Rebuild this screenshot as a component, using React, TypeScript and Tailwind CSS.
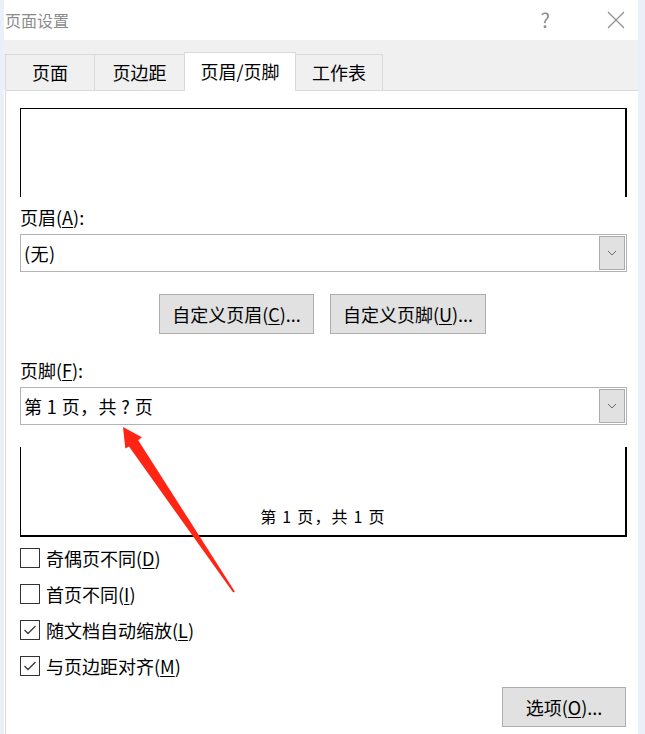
import React from "react";

const FONT = { fontFamily: '"Noto Sans CJK SC", "Noto Sans", sans-serif' };

function Key({ k }: { k: string }) {
  return <span className="underline underline-offset-2 decoration-1">{k}</span>;
}

function Chevron() {
  return (
    <svg width="10" height="6" viewBox="0 0 10 6">
      <polyline points="1,1 5,5 9,1" fill="none" stroke="#6b6b6b" strokeWidth="1" />
    </svg>
  );
}

function Select({ value }: { value: string }) {
  return (
    <div className="flex h-[38px] items-center border border-[#b3b3b3] bg-white py-[1px] pr-[1px]">
      <span className="flex-1 pl-[3px] text-[18px] leading-[24px] tracking-[0.4px] text-black">{value}</span>
      <div className="flex h-full w-[26px] items-center justify-center border border-[#acacac] bg-[#e1e1e1]">
        <Chevron />
      </div>
    </div>
  );
}

function Button({ children, w }: { children: React.ReactNode; w: string }) {
  return (
    <div
      className={`flex h-[40px] items-center justify-center border border-[#adadad] bg-[#e1e1e1] text-[18px] leading-[24px] text-black ${w}`}
    >
      {children}
    </div>
  );
}

function Check({ checked, children }: { checked: boolean; children: React.ReactNode }) {
  return (
    <div className="flex h-[20px] items-center gap-[6px]">
      <div className="flex h-[20px] w-[20px] items-center justify-center border border-[#333333] bg-white">
        {checked && (
          <svg width="18" height="18" viewBox="0 0 18 18">
            <polyline points="3.5,9 7,12.5 14.5,5" fill="none" stroke="#3a3a3a" strokeWidth="1.3" />
          </svg>
        )}
      </div>
      <span className="text-[18px] leading-[24px] text-black">{children}</span>
    </div>
  );
}

const tabs = [
  { label: "页面", w: "w-[89px]" },
  { label: "页边距", w: "w-[90px]" },
  { label: "页眉/页脚", w: "w-[112px]", active: true },
  { label: "工作表", w: "w-[87px]" },
];

export default function App() {
  return (
    <div className="relative flex h-[734px] w-[645px] overflow-hidden bg-[#eaeff8]" style={FONT}>
      <div className="ml-[4px] flex w-[634px] flex-col bg-white">
        {/* title bar */}
        <div className="flex h-[40px] items-center pl-[1px]">
          <span className="text-[16px] text-[#8c8c8c]">页面设置</span>
          <span className="ml-auto mr-[57px] text-[20px] text-[#8c8c8c]">?</span>
          <svg className="mr-[13px]" width="18" height="18" viewBox="0 0 18 18">
            <path d="M1 1 L17 17 M17 1 L1 17" stroke="#8c8c8c" strokeWidth="1.1" />
          </svg>
        </div>

        {/* tab strip */}
        <div className="flex h-[50px] items-end bg-[#f0f0f0] pl-[1px]">
          {tabs.map((t, i) =>
            t.active ? (
              <div
                key={t.label}
                className={`relative z-10 -mb-px flex h-[39px] items-center justify-center border-x border-t border-[#d9d9d9] bg-white pb-[2px] text-[18px] text-black ${t.w}`}
              >
                {t.label}
              </div>
            ) : (
              <div
                key={t.label}
                className={`flex h-[36px] items-center justify-center border-t border-[#d9d9d9] text-[18px] text-black ${t.w} ${
                  i === 0 ? "border-l" : ""
                } ${i === 1 ? "border-l" : ""} ${i === tabs.length - 1 ? "border-r" : ""}`}
              >
                {t.label}
              </div>
            )
          )}
        </div>

        {/* content */}
        <div className="ml-[1px] flex flex-1 flex-col border-l border-t border-[#d9d9d9] pl-[14px] pr-[11px] pt-[17px]">
          <div className="h-[89px] border-l border-r-2 border-t border-black" />

          <div className="mt-[8px] text-[18px] leading-[24px] text-black">
            页眉(<Key k="A" />):
          </div>
          <div className="mt-[5px]">
            <Select value="(无)" />
          </div>

          <div className="mt-[22px] flex justify-center gap-[16px] pr-[2px]">
            <Button w="w-[155px]">
              自定义页眉(<Key k="C" />)...
            </Button>
            <Button w="w-[156px]">
              自定义页脚(<Key k="U" />)...
            </Button>
          </div>

          <div className="mt-[24px] text-[18px] leading-[24px] text-black">
            页脚(<Key k="F" />):
          </div>
          <div className="mt-[5px]">
            <Select value="第 1 页，共 ? 页" />
          </div>

          <div className="mt-[22px] flex h-[90px] items-end justify-center border-b-2 border-l border-r-2 border-black pb-[9px]">
            <span className="text-[16px] leading-[20px] tracking-[1.2px] text-black">第 1 页，共 1 页</span>
          </div>

          <div className="mt-[11px] flex flex-col gap-[16px]">
            <Check checked={false}>
              奇偶页不同(<Key k="D" />)
            </Check>
            <Check checked={false}>
              首页不同(<Key k="I" />)
            </Check>
            <Check checked>
              随文档自动缩放(<Key k="L" />)
            </Check>
            <Check checked>
              与页边距对齐(<Key k="M" />)
            </Check>
          </div>

          <div className="mt-[11px] flex justify-end pr-[1px]">
            <Button w="w-[124px]">
              选项(<Key k="O" />)...
            </Button>
          </div>
        </div>
      </div>

      {/* red annotation arrow */}
      <svg className="pointer-events-none absolute left-0 top-0" width="645" height="734">
        <polygon
          points="123,427 141.9,437.2 138.2,440.3 234.8,591.4 233.2,592.6 129,446.6 125.3,448.4"
          fill="#ff2414"
        />
      </svg>
    </div>
  );
}
